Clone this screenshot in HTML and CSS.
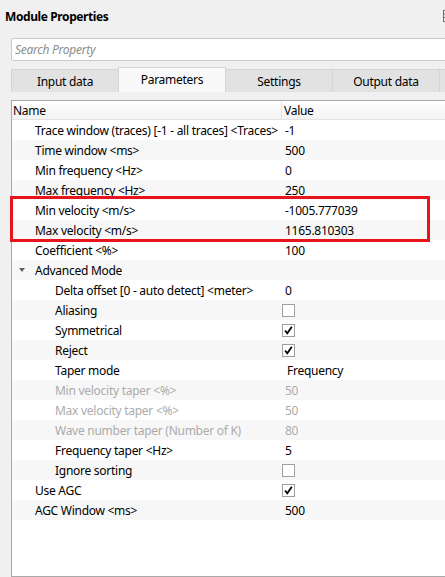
FILE: index.html
```html
<!DOCTYPE html>
<html>
<head>
<meta charset="utf-8">
<link rel="stylesheet" href="styles.css">
</head>
<body>
<div class="page">
  <div class="titlebar">
    <span class="title">Module Properties</span>
    <svg class="corner-icon" width="8" height="14" viewBox="0 0 8 14"><rect x="0.5" y="1.5" width="8" height="11" fill="none" stroke="#707070"/><line x1="0.5" y1="5" x2="8" y2="5" stroke="#707070"/><line x1="0.5" y1="8.5" x2="8" y2="8.5" stroke="#707070"/></svg>
  </div>
  <div class="search"><span class="placeholder">Search Property</span></div>
  <div class="tabs">
    <div class="tab">Input data</div>
    <div class="tab active">Parameters</div>
    <div class="tab">Settings</div>
    <div class="tab">Output data</div>
    <div class="tab stub"></div>
  </div>
  <div class="panel">
    <div class="table">
      <div class="hrow">
        <div class="hcell">Name</div>
        <div class="hcell val">Value</div>
      </div>
      <div class="row"><div class="name l1">Trace window (traces) [-1 - all traces] &lt;Traces&gt;</div><div class="value">-1</div></div>
      <div class="row alt"><div class="name l1">Time window &lt;ms&gt;</div><div class="value">500</div></div>
      <div class="row"><div class="name l1">Min frequency &lt;Hz&gt;</div><div class="value">0</div></div>
      <div class="row alt"><div class="name l1">Max frequency &lt;Hz&gt;</div><div class="value">250</div></div>
      <div class="row"><div class="name l1">Min velocity &lt;m/s&gt;</div><div class="value">-1005.777039</div></div>
      <div class="row alt"><div class="name l1">Max velocity &lt;m/s&gt;</div><div class="value">1165.810303</div></div>
      <div class="row"><div class="name l1">Coefficient &lt;%&gt;</div><div class="value">100</div></div>
      <div class="row alt"><div class="name group"><span class="caret"></span>Advanced Mode</div><div class="value"></div></div>
      <div class="row"><div class="name l2">Delta offset [0 - auto detect] &lt;meter&gt;</div><div class="value">0</div></div>
      <div class="row alt"><div class="name l2">Aliasing</div><div class="value chk"><span class="checkbox"></span></div></div>
      <div class="row"><div class="name l2">Symmetrical</div><div class="value chk"><span class="checkbox"><svg width="11" height="11" viewBox="0 0 11 11"><path d="M2 5.5 L4.3 8.3 L8.8 1.8" fill="none" stroke="#000" stroke-width="1.8"/></svg></span></div></div>
      <div class="row alt"><div class="name l2">Reject</div><div class="value chk"><span class="checkbox"><svg width="11" height="11" viewBox="0 0 11 11"><path d="M2 5.5 L4.3 8.3 L8.8 1.8" fill="none" stroke="#000" stroke-width="1.8"/></svg></span></div></div>
      <div class="row"><div class="name l2">Taper mode</div><div class="value combo">Frequency</div></div>
      <div class="row alt dis"><div class="name l2">Min velocity taper &lt;%&gt;</div><div class="value">50</div></div>
      <div class="row dis"><div class="name l2">Max velocity taper &lt;%&gt;</div><div class="value">50</div></div>
      <div class="row alt dis"><div class="name l2">Wave number taper (Number of K)</div><div class="value">80</div></div>
      <div class="row"><div class="name l2">Frequency taper &lt;Hz&gt;</div><div class="value">5</div></div>
      <div class="row alt"><div class="name l2">Ignore sorting</div><div class="value chk"><span class="checkbox"></span></div></div>
      <div class="row"><div class="name l1">Use AGC</div><div class="value chk"><span class="checkbox"><svg width="11" height="11" viewBox="0 0 11 11"><path d="M2 5.5 L4.3 8.3 L8.8 1.8" fill="none" stroke="#000" stroke-width="1.8"/></svg></span></div></div>
      <div class="row alt"><div class="name l1">AGC Window &lt;ms&gt;</div><div class="value">500</div></div>
      <div class="highlight"></div>
    </div>
  </div>
</div>
</body>
</html>
```
FILE: styles.css
```css
html, body {
  margin: 0;
  padding: 0;
  background: #f0f0f0;
}
.page {
  width: 445px;
  height: 577px;
  overflow: hidden;
  position: relative;
  font-family: "Noto Sans", "Liberation Sans", sans-serif;
  font-size: 12px;
  letter-spacing: -0.27px;
  color: #000;
}
.titlebar {
  height: 32px;
  display: flex;
  align-items: center;
  justify-content: space-between;
  padding-left: 5px;
}
.title {
  font-weight: bold;
  letter-spacing: -0.4px;
}
.corner-icon {
  margin-right: -6px;
}
.search {
  margin-top: 6px;
  margin-left: 11px;
  width: 450px;
  height: 23px;
  box-sizing: border-box;
  background: #fff;
  border: 1px solid #c9c9c9;
  border-radius: 2px;
  display: flex;
  align-items: center;
  padding-left: 3px;
}
.placeholder {
  font-style: italic;
  color: #8c8c8c;
}
.tabs {
  margin-top: 6px;
  margin-left: 11px;
  height: 25px;
  display: flex;
  align-items: flex-end;
  position: relative;
  z-index: 1;
}
.tab {
  width: 108px;
  height: 23px;
  box-sizing: border-box;
  background: #e2e2e2;
  border: 1px solid #d4d4d4;
  border-bottom: none;
  margin-right: -1px;
  display: flex;
  align-items: center;
  justify-content: center;
  flex-shrink: 0;
}
.tab.active {
  height: 25px;
  background: #f9f9f9;
  padding-bottom: 2px;
}
.tab.stub {
  width: 20px;
}
.panel {
  padding-top: 8px;
  padding-left: 11px;
}
.table {
  position: relative;
  width: 450px;
  height: 477px;
  box-sizing: border-box;
  background: #fff;
  border: 1px solid #a9a9a9;
}
.hrow {
  display: grid;
  grid-template-columns: 269px 1fr;
  height: 19px;
  box-sizing: border-box;
  background: linear-gradient(#ffffff, #f3f3f3);
  border-bottom: 1px solid #e3e3e3;
}
.hcell {
  display: flex;
  align-items: center;
  padding-left: 1px;
}
.hcell.val {
  border-left: 1px solid #e3e3e3;
  padding-left: 2px;
}
.row {
  display: grid;
  grid-template-columns: 269px 1fr;
  height: 20px;
}
.row.alt {
  background: #f7f7f7;
}
.name, .value {
  display: flex;
  align-items: center;
  white-space: nowrap;
  overflow: hidden;
}
.name.l1 {
  padding-left: 23px;
}
.name.l2 {
  padding-left: 43px;
}
.name.group {
  padding-left: 23px;
  position: relative;
}
.caret {
  position: absolute;
  left: 7px;
  top: 8px;
  width: 0;
  height: 0;
  border-left: 3.5px solid transparent;
  border-right: 3.5px solid transparent;
  border-top: 4px solid #606060;
}
.value {
  padding-left: 4px;
}
.value.combo {
  padding-left: 6px;
}
.value.chk {
  padding-left: 1px;
}
.checkbox {
  width: 13px;
  height: 13px;
  box-sizing: border-box;
  border: 1px solid #a0a0a0;
  background: #fff;
  display: flex;
  align-items: center;
  justify-content: center;
}
.checkbox svg {
  display: block;
}
.row.dis {
  color: #ababab;
}
.highlight {
  position: absolute;
  left: -2px;
  top: 95px;
  width: 420px;
  height: 46px;
  box-sizing: border-box;
  border: 3px solid #e8141c;
}
```
